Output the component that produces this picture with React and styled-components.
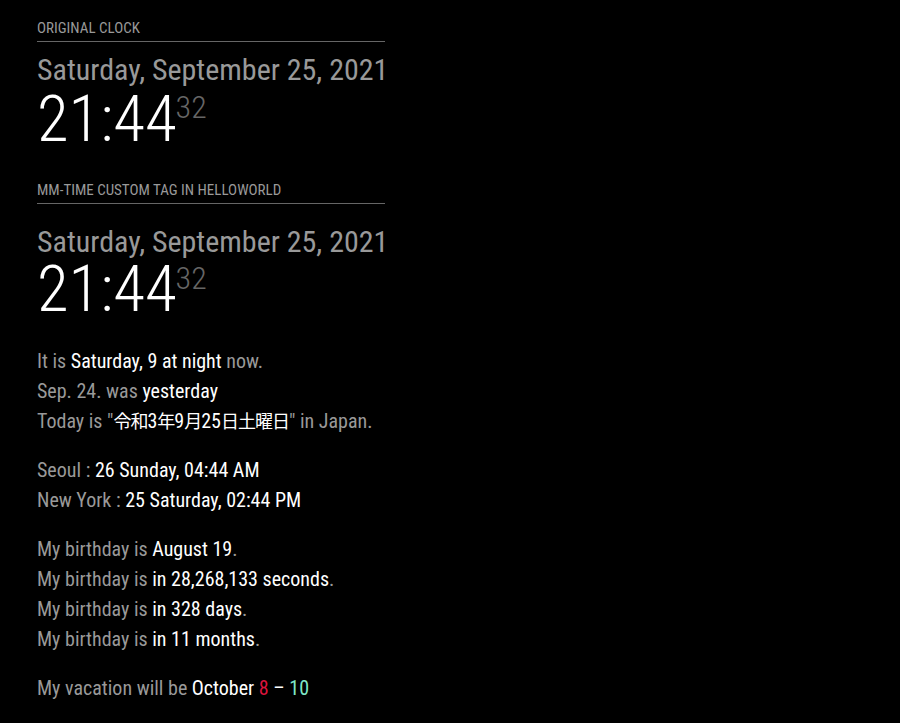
import React from 'react';
import styled, {createGlobalStyle} from 'styled-components';

const GlobalStyle = createGlobalStyle`
  html, body {
    margin: 0;
    padding: 0;
    background: #000;
  }
  body {
    color: #999;
    font-family: "Roboto Condensed", Roboto, "Noto Sans CJK JP", sans-serif;
  }
`;

const Page = styled.div`
  width: 900px;
  height: 723px;
  padding: 21px 0 0 37px;
  box-sizing: border-box;
  overflow: hidden;
`;

const Module = styled.section`
  width: 348px;
  margin-bottom: ${({$gap}) => $gap || 0}px;
`;

const Header = styled.header`
  font-size: 15px;
  line-height: 15px;
  color: #999;
  text-transform: uppercase;
  padding-bottom: 5px;
  border-bottom: 1px solid #666;
  margin-bottom: ${({$space}) => $space || 10}px;
  white-space: nowrap;
`;

const DateLine = styled.div`
  font-size: 30px;
  line-height: 35px;
  color: #999;
  white-space: nowrap;
`;

const Time = styled.div`
  font-size: 65px;
  line-height: 65px;
  font-weight: 300;
  color: #fff;
  white-space: nowrap;
  margin-top: ${({$lift}) => $lift || 0}px;
`;

const Seconds = styled.span`
  font-size: 32px;
  line-height: 1;
  color: #666;
  vertical-align: ${({$raise}) => $raise}px;
  margin-left: -1px;
`;

const Lines = styled.div`
  margin-top: 24px;
  font-size: 20px;
  line-height: 30px;
  color: #999;
`;

const Group = styled.div`
  & + & {
    margin-top: 19px;
  }
`;

const Row = styled.div`
  height: 30px;
  white-space: nowrap;
`;

const Bright = styled.span`
  color: ${({$color}) => $color || '#fff'};
`;

// the kanji run narrower than a full 20px em in the reference
const Kanji = styled.span`
  font-family: "Noto Sans CJK JP", sans-serif;
  font-size: 18px;
  line-height: 1;
  letter-spacing: -1px;
`;

const Clock = ({lift, raise}) => (
  <>
    <DateLine>Saturday, September 25, 2021</DateLine>
    <Time $lift={lift}>
      21:44<Seconds $raise={raise}>32</Seconds>
    </Time>
  </>
);

export default function App() {
  return (
    <Page>
      <GlobalStyle />
      <Module $gap={31}>
        <Header>Original Clock</Header>
        <Clock lift={0} raise={23} />
      </Module>
      <Module>
        <Header $space={20}>mm-time custom tag in helloworld</Header>
        <Clock lift={-2} raise={22} />
        <Lines>
          <Group>
            <Row>It is <Bright>Saturday, 9 at night</Bright> now.</Row>
            <Row>Sep. 24. was <Bright>yesterday</Bright></Row>
            <Row>
              Today is "
              <Bright>
                <Kanji>令和</Kanji>3<Kanji>年</Kanji>9<Kanji>月</Kanji>25<Kanji>日土曜日</Kanji>
              </Bright>
              " in Japan.
            </Row>
          </Group>
          <Group>
            <Row>Seoul : <Bright>26 Sunday, 04:44 AM</Bright></Row>
            <Row>New York : <Bright>25 Saturday, 02:44 PM</Bright></Row>
          </Group>
          <Group>
            <Row>My birthday is <Bright>August 19</Bright>.</Row>
            <Row>My birthday is <Bright>in 28,268,133 seconds</Bright>.</Row>
            <Row>My birthday is <Bright>in 328 days</Bright>.</Row>
            <Row>My birthday is <Bright>in 11 months</Bright>.</Row>
          </Group>
          <Group>
            <Row>
              My vacation will be <Bright>October </Bright>
              <Bright $color="#dc143c">8</Bright>
              <Bright> – </Bright>
              <Bright $color="#7fe8c8">10</Bright>
            </Row>
          </Group>
        </Lines>
      </Module>
    </Page>
  );
}
